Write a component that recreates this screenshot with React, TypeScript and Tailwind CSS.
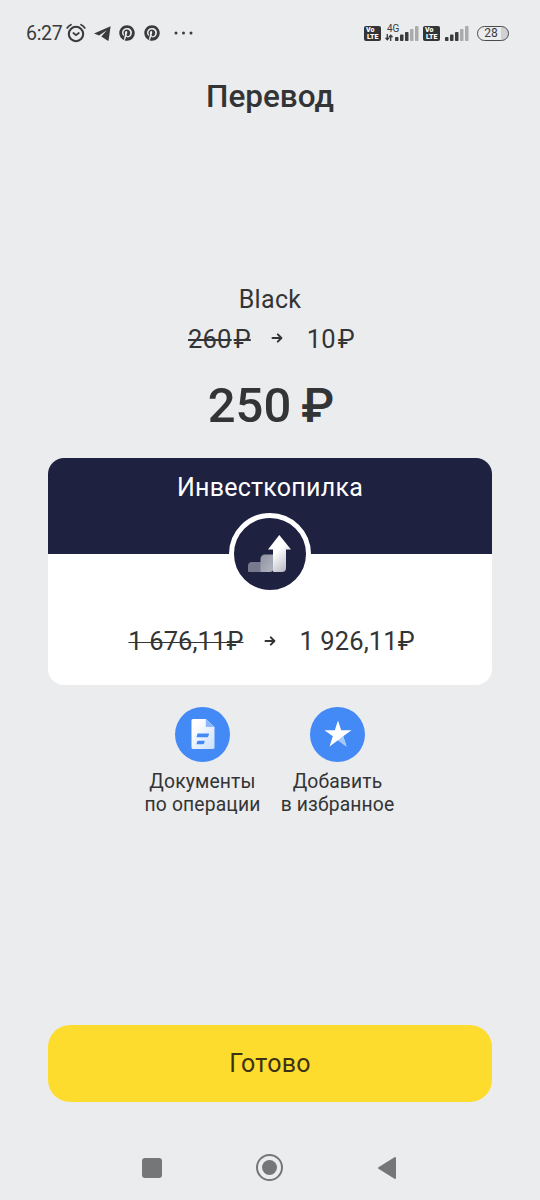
import type { ReactNode } from 'react';
import { FaPinterest } from 'react-icons/fa';

// Barres du signal : les premières sont pleines, les autres grisées
const BARS = [4, 6.5, 9, 12, 15];

function Signal({ level }: { level: number }) {
  return (
    <svg viewBox="0 0 24 15" className="h-[15px] w-6">
      {BARS.map((h, i) => (
        <rect
          key={h}
          x={i * 5}
          y={15 - h}
          width={3.5}
          height={h}
          rx={0.8}
          fill={i < level ? '#3a3b3c' : '#ababac'}
        />
      ))}
    </svg>
  );
}

function VoLte() {
  return (
    <div className="flex h-[15px] w-[17px] flex-col rounded-[2px] bg-[#333435] pt-px pl-[2px] text-[7px] leading-[7px] font-black text-white">
      <span>Vo</span>
      <span className="pl-px">LTE</span>
    </div>
  );
}

function StatusBar() {
  return (
    <header className="flex h-[66px] items-center pr-[31px] pl-[26px] text-[#3a3b3c]">
      <span className="w-10 pt-px text-[19.5px] leading-none tracking-[-0.3px]">6:27</span>
      <svg viewBox="0 0 20 20" className="h-5 w-5 shrink-0" fill="none" stroke="#3a3b3c" strokeLinecap="round">
        <circle cx="10" cy="11" r="7.2" strokeWidth="2.1" />
        <path d="M1.2 5Q2.5 2.8 5 1.7M18.8 5Q17.5 2.8 15 1.7" strokeWidth="1.7" />
        <path d="m7.4 10 2.6 2.2 2.8-2.2" strokeWidth="1.8" />
      </svg>
      <svg viewBox="0 0 17 15" className="ml-2 h-[15px] w-[17px] shrink-0" fill="#3a3b3c">
        <path d="M16.6.3 0 7.6l5 1.9 7.8-5.3-5.5 6.2 6.5 4.3q.6.3.8-.5z" />
      </svg>
      <FaPinterest className="ml-2 h-4 w-4 shrink-0" />
      <FaPinterest className="ml-[9px] h-4 w-4 shrink-0" />
      <svg viewBox="0 0 20 4" className="ml-[14px] h-1 w-5 shrink-0" fill="#3a3b3c">
        <circle cx="2" cy="2" r="1.5" />
        <circle cx="9.5" cy="2" r="1.5" />
        <circle cx="17" cy="2" r="1.5" />
      </svg>
      <div className="ml-auto flex items-center">
        <VoLte />
        <div className="ml-1 flex h-[18px] w-[10px] flex-col">
          <span className="pl-[2px] text-[10px] leading-[10px]">4G</span>
          <svg viewBox="0 0 8 7" className="h-[7px] w-2" fill="none" stroke="#3a3b3c" strokeWidth="1.3">
            <path d="M2.3 0v5.5M.5 3.8l1.8 2 1.8-2M5.7 7V1.5M3.9 3.2l1.8-2 1.8 2" />
          </svg>
        </div>
        <Signal level={3} />
        <div className="ml-1">
          <VoLte />
        </div>
        <div className="ml-[5px]">
          <Signal level={3} />
        </div>
        <div className="ml-2 flex h-[15px] w-8 items-center justify-center rounded-full border-[1.5px] border-[#4a4b4c] bg-linear-to-r from-transparent from-75% to-[#d0d1d2] to-75% text-[12px] leading-none">
          <span className="pr-1">28</span>
        </div>
      </div>
    </header>
  );
}

function Arrow() {
  return (
    <svg viewBox="0 0 12 12" className="h-3 w-3 shrink-0" fill="none" stroke="#333435" strokeWidth="2" strokeLinecap="round" strokeLinejoin="round">
      <path d="M1.5 6h8.7M6.8 2.4 10.4 6 6.8 9.6" />
    </svg>
  );
}

function Action({ icon, lines }: { icon: ReactNode; lines: string[] }) {
  return (
    <button className="flex w-[135px] flex-col items-center">
      <span className="flex h-[55px] w-[55px] items-center justify-center rounded-full bg-[#448af7]">{icon}</span>
      <span className="mt-2 text-[19.3px] leading-[23px] tracking-[0.15px] whitespace-nowrap text-[#333435]">
        {lines.map((line) => (
          <span key={line} className="block">
            {line}
          </span>
        ))}
      </span>
    </button>
  );
}

function DocumentIcon() {
  return (
    <svg viewBox="0 0 24 32" className="mb-px h-8 w-6">
      <defs>
        <linearGradient id="doc" x1="0" y1="0" x2="1" y2="1">
          <stop offset="0.2" stopColor="#fff" />
          <stop offset="1" stopColor="#c9defc" />
        </linearGradient>
      </defs>
      <path d="M2 1h12.8L23.5 9v20.5a1.5 1.5 0 0 1-1.5 1.5h-20A1.5 1.5 0 0 1 .5 29.5v-27A1.5 1.5 0 0 1 2 1z" fill="url(#doc)" />
      <path d="M14.8 1 23.5 9h-8.7z" fill="#8fb8fa" />
      <path d="M7 15.5h10.500q.8 0 .5.8l-.7 2q-.3.9-1.200.9H5.500l.7-2.800q.2-.9.8-.9zM7 22.700h6.200q.8 0 .5.8l-.6 1.800q-.3.9-1.200.9H5.500l.7-2.600q.2-.9.8-.9z" fill="#448af7" />
    </svg>
  );
}

function StarIcon() {
  return (
    <svg viewBox="0 0 28 28" className="mb-px h-7 w-7">
      <path d="m14 .5 3.2 9.7h10.3l-8.3 6.1 3.3 10.2-8.5-6.3-8.5 6.3 3.3-10.2L.5 10.2h10.3z" fill="#fff" />
      <path d="m14 20.2 5.2-3.9 3.3 10.2z" fill="#a5c7fb" />
    </svg>
  );
}

function InvestIcon() {
  return (
    <svg viewBox="0 0 44 40" className="mr-[2px] h-10 w-11">
      <defs>
        <linearGradient id="arrow" x1="0.3" y1="0.3" x2="0.7" y2="1">
          <stop offset="0.2" stopColor="#fff" />
          <stop offset="1" stopColor="#b9bac6" />
        </linearGradient>
        <linearGradient id="step" x1="0" y1="0" x2="1" y2="1">
          <stop offset="0" stopColor="#9293a3" />
          <stop offset="1" stopColor="#b3b4c0" />
        </linearGradient>
      </defs>
      <path d="M5 28h9.5v10H2q-1 0-1-1v-5a4 4 0 0 1 4-4z" fill="#777a8e" />
      <path d="M18 20.5h8.5V34a4 4 0 0 1-4 4H14.5q-1 0-1-1V25A4.500 4.500 0 0 1 18 20.500z" fill="url(#step)" />
      <path d="M32.300 1 44 15.500h-5V34a4 4 0 0 1-4 4h-8q-1 0-1-1V15.500h-5z" fill="url(#arrow)" />
    </svg>
  );
}

export default function App() {
  return (
    <div className="flex h-[1200px] w-[540px] flex-col bg-[#ebeced] font-['Roboto',sans-serif] text-[#333435]">
      <StatusBar />

      <h1 className="mt-[12px] text-center text-[31.5px] leading-[38px] font-medium">Перевод</h1>

      <main className="flex flex-1 flex-col items-center pt-[169px]">
        {/* Compte source */}
        <p className="text-[25px] leading-[30px] tracking-[0.3px]">Black</p>
        <div className="mt-[10px] ml-[3px] flex items-center text-[25.5px] leading-[28px] tracking-[0.2px]">
          <span className="line-through decoration-[1.5px]">
            260<span className="pl-[2px]">₽</span>
          </span>
          <span className="mr-6 mb-[2px] ml-5">
            <Arrow />
          </span>
          <span>
            10<span className="pl-[2px]">₽</span>
          </span>
        </div>

        <p className="mt-[25px] ml-[2px] text-[49px] leading-[56px] font-medium">
          250<span className="pl-[10px] text-[48px]">₽</span>
        </p>

        {/* Compte destination */}
        <section className="mt-6 flex h-[227px] w-[444px] flex-col overflow-hidden rounded-[16px] bg-white">
          <div className="flex h-24 flex-col items-center bg-[#1e2140]">
            <h2 className="mt-[15px] text-[25px] leading-[30px] tracking-[0.25px] text-white">Инвесткопилка</h2>
            <div className="mt-[10px] flex h-[82px] w-[82px] shrink-0 items-center justify-center rounded-full border-[5px] border-white bg-[#1e2140]">
              <InvestIcon />
            </div>
          </div>
          <div className="mt-[73px] ml-[3px] flex items-center justify-center text-[25.5px] leading-[28px] tracking-[0.1px]">
            <span className="line-through decoration-1">1 676,11₽</span>
            <span className="mr-6 mb-px ml-5">
              <Arrow />
            </span>
            <span>1 926,11₽</span>
          </div>
        </section>

        <div className="mt-[22px] flex">
          <Action icon={<DocumentIcon />} lines={['Документы', 'по операции']} />
          <Action icon={<StarIcon />} lines={['Добавить', 'в избранное']} />
        </div>

        <button className="mt-auto h-[77px] w-[444px] rounded-[22px] bg-[#fedc2d] text-[25px] tracking-[0.3px] text-[#3b3115]">
          Готово
        </button>
      </main>

      {/* Navigation Android */}
      <nav className="flex h-[98px] items-center justify-between pt-[33px] pr-[143px] pl-[142px]">
        <div className="h-5 w-5 rounded-[3px] bg-[#757677]" />
        <div className="flex h-[27px] w-[27px] items-center justify-center rounded-full border-2 border-[#757677]">
          <div className="h-[15px] w-[15px] rounded-full bg-[#757677]" />
        </div>
        <svg viewBox="0 0 20 24" className="h-6 w-5">
          <path d="M2 12 18 2v20z" fill="#757677" stroke="#757677" strokeWidth="2" strokeLinejoin="round" />
        </svg>
      </nav>
    </div>
  );
}
